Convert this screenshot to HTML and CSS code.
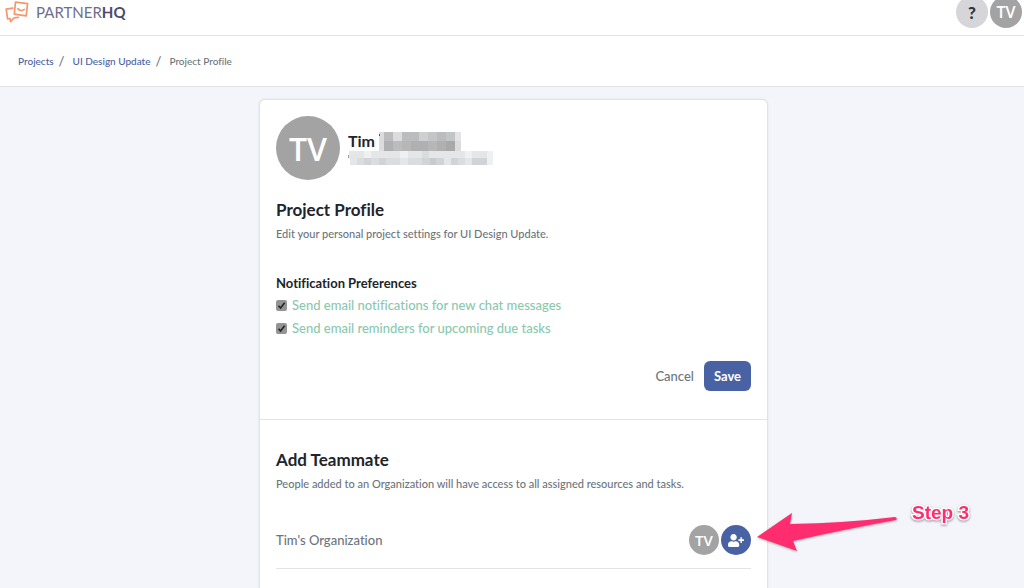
FILE: index.html
```html
<!DOCTYPE html>
<html lang="en">
<head>
    <meta charset="UTF-8">
    <meta name="viewport" content="width=device-width, initial-scale=1.0">
    <title>Project Profile - PartnerHQ</title>
    <link rel="stylesheet" href="styles.css">
</head>
<body>

    <header class="header">
        <a class="logo" href="#">
            <svg class="logo-icon" width="24" height="22" viewBox="0 0 24 22" fill="none" stroke="#f4976c" stroke-width="1.7" stroke-linejoin="round" stroke-linecap="round">
                <path d="M10.500 1.200L22.600 2.700L21.200 14.800L9.300 13.200Z"/>
                <path d="M12.800 7.600Q15.800 11 19.300 8.400"/>
                <path d="M7.800 7.200L1.200 8.200L2.600 17.800L5 17.500L5.600 20.600L8.800 17L13.300 16.300"/>
            </svg>
            <span class="logo-text">PARTNER<b>HQ</b></span>
        </a>
        <div class="header-actions">
            <button class="help-btn" type="button" aria-label="Help">?</button>
            <button class="avatar avatar-md" type="button" aria-label="Account">TV</button>
        </div>
    </header>

    <nav class="breadcrumb" aria-label="Breadcrumb">
        <a href="#">Projects</a>
        <span class="slash">/</span>
        <a href="#">UI Design Update</a>
        <span class="slash">/</span>
        <span>Project Profile</span>
    </nav>

    <main class="main">
        <div class="card">
            <section class="profile">
                <div class="user">
                    <div class="avatar avatar-lg">TV</div>
                    <div class="user-info">
                        <div class="user-name">
                            <span>Tim</span>
                            <!-- hidden last name -->
                            <svg width="82" height="19" viewBox="0 0 82 19" shape-rendering="crispEdges">
                                <path fill="#c4c5c6" d="M0 0h82v19H0z"/>
                                <path fill="#dcdcdd" d="M0 0h5v19H0zM14 0h9v9h-9zM76 9h6v10h-6z"/>
                                <path fill="#e4e4e5" d="M76 0h6v9h-6z"/>
                                <path fill="#bbbcbd" d="M5 0h9v9H5zM23 0h17v9H23zM58 0h9v9h-9zM14 9h9v10h-9z"/>
                                <path fill="#cfcfd0" d="M40 0h9v9h-9z"/>
                                <path fill="#afb0b1" d="M5 9h9v10H5zM32 9h17v10H32zM58 9h9v10h-9z"/>
                                <path fill="#b7b7b8" d="M23 9h9v10h-9zM49 9h9v10h-9z"/>
                                <path fill="#a9a9aa" d="M67 9h9v10h-9z"/>
                                <path fill="#55575a" d="M0 2h1v2H0z"/>
                            </svg>
                        </div>
                        <!-- hidden email -->
                        <svg class="user-email" width="145" height="14" viewBox="0 0 145 14" shape-rendering="crispEdges">
                            <path fill="#e4e6e8" d="M1 0h144v14H1z"/>
                            <path fill="#fff" d="M0 0h1v14H0zM1 8h1v6H1z"/>
                            <path fill="#eff0f1" d="M16 0h7v7h-7zM52 0h8v7h-8zM117 0h7v7h-7zM139 0h6v14h-6z"/>
                            <path fill="#dadddf" d="M9 7h7v7H9zM23 7h8v7h-8zM38 7h14v7H38zM60 7h14v7H60zM74 0h7v7h-7zM110 7h7v7h-7z"/>
                            <path fill="#d0d4d7" d="M16 7h7v7h-7zM31 7h7v7h-7zM74 7h8v7h-8zM88 7h8v7h-8zM103 7h7v7h-7zM124 7h15v7h-15z"/>
                            <path fill="#c6cbcf" d="M82 7h6v7h-6z"/>
                            <path fill="#9aa0a5" d="M0 4h1v3H0z"/>
                        </svg>
                    </div>
                </div>

                <h2>Project Profile</h2>
                <p class="help-text">Edit your personal project settings for UI Design Update.</p>

                <form class="settings">
                    <h3>Notification Preferences</h3>
                    <label class="check">
                        <input type="checkbox" checked>
                        Send email notifications for new chat messages
                    </label>
                    <label class="check">
                        <input type="checkbox" checked>
                        Send email reminders for upcoming due tasks
                    </label>
                    <div class="form-actions">
                        <button class="cancel-btn" type="button">Cancel</button>
                        <button class="save-btn" type="button">Save</button>
                    </div>
                </form>
            </section>

            <section class="teammates">
                <h2>Add Teammate</h2>
                <p class="help-text">People added to an Organization will have access to all assigned resources and tasks.</p>

                <div class="org-row">
                    <span class="org-name">Tim's Organization</span>
                    <div class="org-members">
                        <div class="avatar avatar-sm">TV</div>
                        <button class="add-btn" type="button" aria-label="Add teammate">
                            <svg width="16" height="13" viewBox="0 0 640 512" fill="#fff">
                                <path d="M624 208h-64v-64c0-8.800-7.200-16-16-16h-32c-8.800 0-16 7.200-16 16v64h-64c-8.800 0-16 7.200-16 16v32c0 8.800 7.200 16 16 16h64v64c0 8.800 7.200 16 16 16h32c8.800 0 16-7.200 16-16v-64h64c8.800 0 16-7.200 16-16v-32c0-8.800-7.200-16-16-16zm-400 48c70.700 0 128-57.300 128-128S294.700 0 224 0 96 57.300 96 128s57.300 128 128 128zm89.600 32h-16.700c-22.200 10.200-46.900 16-72.900 16s-50.600-5.800-72.900-16h-16.700C60.200 288 0 348.200 0 422.400V464c0 26.500 21.500 48 48 48h352c26.500 0 48-21.500 48-48v-41.600c0-74.200-60.200-134.400-134.400-134.400z"/>
                            </svg>
                        </button>
                        <div class="callout">
                            <svg width="150" height="59" viewBox="0 -9 150 59">
                                <path fill="#ff2d6f" d="M1 27L36 3L34 14Q90 13 139 7Q142 8 140 10Q90 19 37 31L41 41Z"/>
                            </svg>
                            <span class="callout-text">Step 3</span>
                        </div>
                    </div>
                </div>
            </section>
        </div>
    </main>

</body>
</html>
```
FILE: styles.css
```css
* {
    box-sizing: border-box;
}
body {
    margin: 0;
    height: 100vh;
    overflow: hidden;
    display: flex;
    flex-direction: column;
    font-family: Lato, "Open Sans", sans-serif;
    font-size: 14px;
    font-weight: 500;
    font-variant-ligatures: none;
    color: #212529;
    background-color: #f4f5fb;
}
h2, h3, p {
    margin: 0;
}
button {
    font-family: inherit;
    font-weight: inherit;
    border: none;
    padding: 0;
    cursor: pointer;
}
a {
    color: #4862a3;
    text-decoration: none;
}

/* header */
.header {
    display: flex;
    justify-content: space-between;
    align-items: center;
    margin-top: -4px;
    padding: 0 2px 7px 5px;
    background-color: #fff;
    border-bottom: 1px solid #e3e4e6;
}
.logo {
    display: flex;
    align-items: center;
    gap: 7px;
    color: #6f6e8b;
}
.logo-text {
    font-size: 15px;
    font-weight: 400;
    line-height: 20px;
}
.logo-text b {
    color: #4d4b6b;
}
.header-actions {
    display: flex;
    gap: 2px;
}
.help-btn {
    width: 32px;
    height: 32px;
    border-radius: 50%;
    background-color: #d5d5da;
    color: #2f353c;
    font-size: 17px;
    font-weight: 900;
}
.avatar {
    display: flex;
    flex-shrink: 0;
    align-items: center;
    justify-content: center;
    border-radius: 50%;
    background-color: #a3a3a3;
    color: #fff;
    font-family: "Open Sans", sans-serif;
    font-weight: 600;
}
.avatar-sm {
    width: 30px;
    height: 30px;
    font-size: 15px;
}
.avatar-md {
    width: 32px;
    height: 32px;
    font-size: 16px;
}
.avatar-lg {
    width: 64px;
    height: 64px;
    font-size: 32px;
}

/* breadcrumb */
.breadcrumb {
    display: flex;
    align-items: center;
    gap: 5px;
    padding: 15px 18px;
    background-color: #fff;
    border-bottom: 1px solid #e3e4e9;
    color: #6c757d;
    font-size: 10px;
    line-height: 20px;
}
.breadcrumb .slash {
    margin-right: 3px;
    font-size: 13px;
}

/* card */
.main {
    padding: 12px 0 0 3px;
}
.card {
    max-width: 509px;
    margin: 0 auto;
    padding-bottom: 40px;
    background-color: #fff;
    border: 1px solid #e1e2e6;
    border-radius: 6px;
    box-shadow: 0 0 2px rgba(0, 0, 0, 0.1);
}
.card h2 {
    font-size: 17px;
    line-height: 24px;
}
.profile {
    padding: 16px 16px 28px;
    border-bottom: 1px solid #e3e4e6;
}
.user {
    display: flex;
    align-items: center;
    gap: 8px;
    margin-bottom: 18px;
}
.user-name {
    display: flex;
    align-items: center;
    gap: 4px;
    font-size: 16px;
    font-weight: bold;
    line-height: 20px;
}
.user-email {
    display: block;
}
.help-text {
    margin-top: 4px;
    color: #6c757d;
    font-size: 11px;
    line-height: 16px;
}
.settings {
    margin-top: 31px;
}
.settings h3 {
    font-size: 13px;
    line-height: 20px;
    margin-bottom: 1px;
}
.check {
    display: flex;
    align-items: center;
    gap: 5px;
    color: #8bc8ae;
    font-size: 13px;
    line-height: 23px;
}
.check input {
    appearance: none;
    width: 11px;
    height: 11px;
    margin: 0;
    border-radius: 2px;
    background: #949494 url("data:image/svg+xml,%3Csvg xmlns='http://www.w3.org/2000/svg' viewBox='0 0 11 11'%3E%3Cpath d='M2.500 5.700L4.600 8L8.600 2.800' fill='none' stroke='%23222' stroke-width='1.600'/%3E%3C/svg%3E");
}
.form-actions {
    display: flex;
    justify-content: flex-end;
    align-items: center;
    gap: 10px;
    margin-top: 21px;
}
.cancel-btn {
    background: none;
    color: #6c757d;
    font-size: 13px;
}
.save-btn {
    height: 30px;
    padding: 0 10px;
    border-radius: 6px;
    background-color: #4862a3;
    color: #fff;
    font-size: 13px;
    font-weight: bold;
}

/* teammates */
.teammates {
    padding: 28px 16px 0;
}
.org-row {
    display: flex;
    justify-content: space-between;
    align-items: center;
    margin-top: 33px;
    padding-bottom: 13px;
    border-bottom: 1px solid #e3e4e6;
}
.org-name {
    color: #6c757d;
    font-size: 13px;
}
.org-members {
    display: flex;
    gap: 2px;
    position: relative;
}
.add-btn {
    display: flex;
    align-items: center;
    justify-content: center;
    width: 30px;
    height: 30px;
    border-radius: 50%;
    background-color: #4862a3;
}

/* callout over the page, next to the add button */
.callout {
    position: absolute;
    left: 100%;
    top: -24px;
    display: flex;
    align-items: flex-start;
    gap: 6px;
    padding-left: 5px;
    pointer-events: none;
}
.callout svg {
    filter: drop-shadow(0 1px 1px rgba(0, 0, 0, 0.3));
}
.callout-text {
    color: #ff2d6f;
    font-family: "Liberation Sans", Arial, sans-serif;
    font-size: 19px;
    font-weight: bold;
    line-height: 24px;
    white-space: nowrap;
    -webkit-text-stroke: 3px #fff;
    paint-order: stroke fill;
    filter: drop-shadow(0 1px 1px rgba(0, 0, 0, 0.4));
}
```
